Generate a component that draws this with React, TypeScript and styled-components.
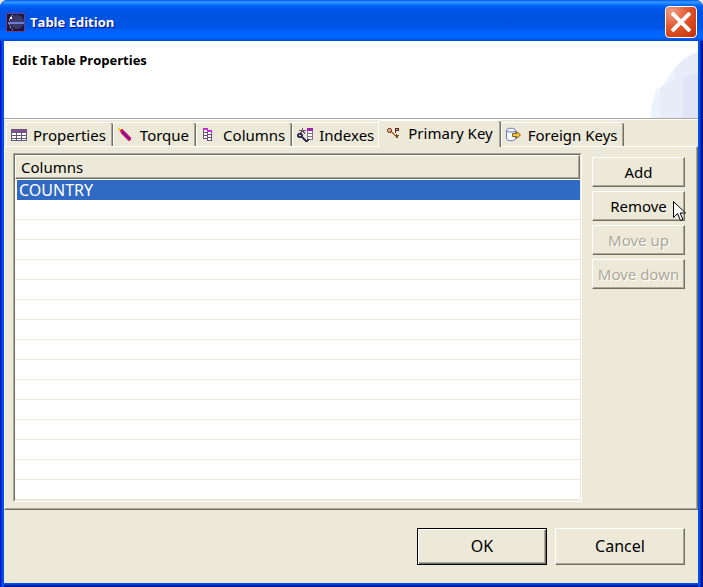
import React, { useState } from "react";
import styled, { createGlobalStyle, css } from "styled-components";

const face = "#ece9d8";
const shadow = "#aca899";
const dark = "#716f64";
const uiFont = '"Noto Sans", "Open Sans", sans-serif';

const GlobalStyle = createGlobalStyle`
  * { box-sizing: border-box; }
  body { margin: 0; background: #ece9d8; }
  button { font: inherit; color: inherit; }
`;

const Dialog = styled.div`
  min-height: 100vh;
  display: flex;
  flex-direction: column;
  padding: 0 5px 4px 4px;
  border-radius: 7px 7px 0 0;
  background:
    linear-gradient(to right, #0016c8 0 1px, #0831d9 1px 2px, #0050ee 2px 4px, transparent 4px) left / 4px 100% no-repeat,
    linear-gradient(to right, #0050ee 0 2px, #0030c8 2px 3px, #001594 3px 5px) right / 5px 100% no-repeat,
    linear-gradient(#0050ee 0 1px, #0040dc 1px 2px, #001ea0 2px 4px) bottom / 100% 4px no-repeat,
    #0054e3;
  font: 15px/20px ${uiFont};
  color: #000;
  overflow: hidden;
`;

const TitleBar = styled.header`
  display: flex;
  align-items: center;
  height: 41px;
  margin: 0 -5px 0 -4px;
  padding: 3px 6px 0 6px;
  gap: 5px;
  border-radius: 7px 7px 0 0;
  background: linear-gradient(#0058e6 0, #3a93ff 2px, #288eff 3px, #036dff 5px, #0057ee 8px, #0053e1 14px, #0055e6 28px, #0066ff 32px, #0066ff 37px, #005bf0 39px, #0043cf 41px);
`;

const Title = styled.h1`
  flex: 1;
  margin: 0;
  font: bold 13px/18px "Open Sans", sans-serif;
  color: #fff;
  text-shadow: 1px 1px #0f1089;
`;

const CloseButton = styled.button`
  display: grid;
  place-items: center;
  width: 32px;
  height: 32px;
  padding: 0;
  border: 1px solid #fff;
  border-radius: 4px;
  background: radial-gradient(circle at 20% 15%, #f09a80, #e2582f 45%, #d03c10 80%, #b63010);
`;

const Banner = styled.section`
  display: flex;
  justify-content: space-between;
  height: 78px;
  background: #fff;
  border-bottom: 1px solid ${shadow};
`;

const BannerTitle = styled.h2`
  margin: 0;
  padding: 10px 8px;
  font: bold 13px/18px "Open Sans", sans-serif;
`;

const TabList = styled.div`
  display: flex;
  align-items: flex-end;
  height: 27px;
  padding-left: 2px;
  border-top: 1px solid #fff;
`;

const Tab = styled.button<{ $active: boolean }>`
  display: flex;
  align-items: center;
  gap: 6px;
  height: 24px;
  padding: 0 7px 0 4px;
  border: 0 solid #fff;
  border-width: 1px 0 0 1px;
  border-radius: 2px 2px 0 0;
  background: ${face};
  box-shadow: inset -1px 0 ${dark}, inset -2px 0 ${shadow};
  white-space: nowrap;
  ${({ $active }) => $active && css`
    height: 27px;
    padding: 0 8px 3px 7px;
    margin: 0 0 -1px -3px;
    z-index: 1;
  `}
`;

const TabPanel = styled.main`
  flex: 1;
  display: flex;
  gap: 10px;
  padding: 6px 12px 7px 8px;
  border: 1px solid;
  border-color: #fff ${dark} ${dark} #fff;
  box-shadow: inset -1px -1px ${shadow};
`;

const TableFrame = styled.div`
  flex: 1;
  border: 1px solid;
  border-color: ${shadow} #fff #fff ${shadow};
  display: flex;
`;

const TableArea = styled.div`
  flex: 1;
  border: 1px solid;
  border-color: ${dark} ${face} ${face} ${dark};
  background: repeating-linear-gradient(#fff 0 19px, ${face} 19px 20px) 0 25px no-repeat #fff;
`;

const KeyTable = styled.table`
  width: 100%;
  border-collapse: separate;
  border-spacing: 0;
`;

const HeadCell = styled.th`
  height: 24px;
  padding: 0 5px;
  text-align: left;
  font-weight: normal;
  background: ${face};
  border: 1px solid;
  border-color: #fff ${dark} ${dark} #fff;
  box-shadow: inset -1px -1px ${shadow};
`;

const Cell = styled.td`
  height: 21px;
  padding: 0 2px;
  font-size: 16px;
  line-height: 19px;
  color: #fff;
  background: #316ac5;
  border: solid #fff;
  border-width: 1px 0 0 2px;
`;

const Actions = styled.div`
  display: flex;
  flex-direction: column;
  gap: 4px;
  width: 93px;
  padding-top: 4px;
`;

const PushButton = styled.button<{ $large?: boolean; $primary?: boolean }>`
  width: ${({ $large }) => ($large ? "130px" : "auto")};
  height: ${({ $large }) => ($large ? "37px" : "30px")};
  padding: ${({ $large }) => ($large ? "0 0 2px" : "0")};
  font-size: ${({ $large }) => ($large ? "16px" : "15px")};
  white-space: nowrap;
  background: ${face};
  border: 1px solid;
  border-color: #fff ${dark} ${dark} #fff;
  box-shadow: inset -1px -1px ${shadow};
  ${({ $primary }) => $primary && css`
    border-color: #000;
    box-shadow: inset 1px 1px #fff, inset -1px -1px ${dark}, inset -2px -2px ${shadow};
  `}
  &:disabled {
    color: ${shadow};
    text-shadow: 1px 1px #fff;
  }
`;

const Footer = styled.footer`
  display: flex;
  justify-content: flex-end;
  gap: 8px;
  padding: 18px 13px;
  background: ${face};
`;

const Body = styled.div`
  flex: 1;
  display: flex;
  flex-direction: column;
  background: ${face};
`;

const Pointer = styled.svg`
  position: absolute;
  right: -1px;
  top: 10px;
`;

const PointerHost = styled.div`
  position: relative;
  display: grid;
`;

const svgProps = { width: 16, height: 16, viewBox: "0 0 16 16", shapeRendering: "crispEdges" as const };

const TableIcon = () => (
  <svg {...svgProps}>
    <path fill="#fff" d="M0 2h16v12H0z" />
    <path fill="#8a4a98" d="M0 2h16v3H0z" />
    <path fill="none" stroke="#63587b" d="M.5 2.5h15v11H.5zM1 5.5h14M1 8.5h14M1 11.5h14M5.5 5v8M10.5 5v8" />
  </svg>
);
const TorqueIcon = () => (
  <svg {...svgProps}>
    <path fill="#f01468" d="M2 2h3v1h1v1h1v1h1v1h1v1h1v1h1v1h1v1h1v3h-1v1h-2v-1H9v-1H8v-1H7v-1H6V9H5V8H4V7H3V5H2z" />
    <path fill="#4020b0" d="M4 4h1v1h1v1h1v1h1v1h1v1h1v1h1v1h1v1h-2v-1H9v-1H8V9H7V8H6V7H5V6H4z" />
    <path fill="#e8d820" d="M0 1h2v1h1v1H2v1H1V3H0z" />
  </svg>
);
const ColumnsIcon = () => (
  <svg {...svgProps}>
    <path fill="#fff" stroke="#6b5084" d="M2.500 1.500h4v10h-4z" />
    <path fill="#fff" stroke="#6b5084" d="M6.500 3.500h4v10h-4z" />
    <path fill="#c828d8" d="M2 1h5v2H2zM6 3h5v2H6z" />
    <path stroke="#6b5084" d="M3 5.500h3M3 8.500h3M7 7.500h3M7 10.500h3" />
  </svg>
);
const IndexesIcon = () => (
  <svg {...svgProps}>
    <path fill="#fff" stroke="#8a6f9c" d="M10.500 1.500h5v11h-5z" />
    <path fill="#a020b0" d="M10 1h6v3h-6z" />
    <path stroke="#8a6f9c" d="M11 6.500h4M11 9.500h4" />
    <path fill="#6b5070" d="M5 1h1v2h3v1H7v1h1v2H7V6H6V5H5v1H4v1H3V5h1V4H2V3h3z" />
    <path fill="#39355a" d="M1 6h4v1h1v3h1v1h1v1h1v1h1v-1h2v2h-1v1H8v-1H7v-1H6v-1H5v-1H1v-1H0V7h1z" />
    <path fill={face} d="M2 8h2v1H2z" />
  </svg>
);
const KeyIcon = () => (
  <svg {...svgProps}>
    <path fill="#7b4a28" d="M2 3h3v1h1v3h1v1h1v1h1v1h1v-1h1v1h2v1h-1v2h-2v-1H9v-1H8v-1H7V9H6V8H2V7H1V4h1z" />
    <path fill="#e6a080" d="M2 4h3v2H4v1H2z" />
    <path fill="#d89a30" d="M5 7h1v1h1v1h1v1h1v1h1v1H9v-1H8v-1H7V9H6V8H5z" />
    <path fill="#4b2c28" d="M9 3h4v3h-3v2H9z" />
    <path fill="#e6a080" d="M10 4h2v1h-2z" />
  </svg>
);
const ForeignIcon = () => (
  <svg {...svgProps} shapeRendering="auto">
    <path fill="#f4f7ff" stroke="#6878c0" d="M.5 3.500v8c0 3 9 3 9 0v-8c0-3-9-3-9 0zc0 2 9 2 9 0" />
    <path fill="#f0c840" stroke="#806020" d="M6.500 6.500h4v-2l4 3.500-4 3.500v-2h-4z" />
  </svg>
);
const AppIcon = () => (
  <svg width="19" height="19" viewBox="0 0 19 19">
    <path fill="#1c1640" stroke="#6c3f88" d="M.5.5h18v18H.5z" />
    <circle cx="11" cy="9" r="7" fill="#3a3868" />
    <path fill="none" stroke="#b8b4dc" strokeDasharray="3 1" d="M7 2C2 5 2 14 7 17" />
    <path fill="#fff" d="M4 4h2v2H4z" />
    <path stroke="#6c7cd0" strokeWidth="2" d="M2 10h16" />
  </svg>
);

const tabs = [
  { label: "Properties", Icon: TableIcon },
  { label: "Torque", Icon: TorqueIcon },
  { label: "Columns", Icon: ColumnsIcon },
  { label: "Indexes", Icon: IndexesIcon },
  { label: "Primary Key", Icon: KeyIcon },
  { label: "Foreign Keys", Icon: ForeignIcon },
];

export default function App() {
  const [active, setActive] = useState("Primary Key");
  return (
    <>
      <GlobalStyle />
      <Dialog role="dialog" aria-labelledby="dialog-title">
        <TitleBar>
          <AppIcon />
          <Title id="dialog-title">Table Edition</Title>
          <CloseButton aria-label="Close">
            <svg width="20" height="20" viewBox="0 0 20 20">
              <path stroke="#fff" strokeWidth="4" d="M1 1l18 18M19 1L1 19" />
            </svg>
          </CloseButton>
        </TitleBar>
        <Body>
          <Banner>
            <BannerTitle>Edit Table Properties</BannerTitle>
            <svg width="48" height="77" viewBox="0 0 48 77">
              <path fill="#edf3fc" d="M1 77V66l4-12v-4l8-6L24 28Q36 14 48 11v66z" />
              <path fill="#e8ecf9" d="M10 77V47l15-9V27Q36 14 48 11v66z" />
              <path fill="#dfe5f7" d="M33 77V37l8-4 7-1v45z" />
            </svg>
          </Banner>
          <TabList role="tablist">
            {tabs.map(({ label, Icon }) => (
              <Tab key={label} role="tab" aria-selected={active === label} $active={active === label} onClick={() => setActive(label)}>
                <Icon />
                {label}
              </Tab>
            ))}
          </TabList>
          <TabPanel role="tabpanel">
            <TableFrame>
              <TableArea>
                <KeyTable>
                  <thead><tr><HeadCell>Columns</HeadCell></tr></thead>
                  <tbody><tr><Cell>COUNTRY</Cell></tr></tbody>
                </KeyTable>
              </TableArea>
            </TableFrame>
            <Actions>
              <PushButton>Add</PushButton>
              <PointerHost>
                <PushButton>Remove</PushButton>
                <Pointer width="13" height="21" viewBox="0 0 13 21">
                  <path fill="#fff" stroke="#000" d="M.5.5v16l4-4 3 7 2.500-1-3-6.500h5.500z" />
                </Pointer>
              </PointerHost>
              <PushButton disabled>Move up</PushButton>
              <PushButton disabled>Move down</PushButton>
            </Actions>
          </TabPanel>
          <Footer>
            <PushButton $large $primary>OK</PushButton>
            <PushButton $large>Cancel</PushButton>
          </Footer>
        </Body>
      </Dialog>
    </>
  );
}
